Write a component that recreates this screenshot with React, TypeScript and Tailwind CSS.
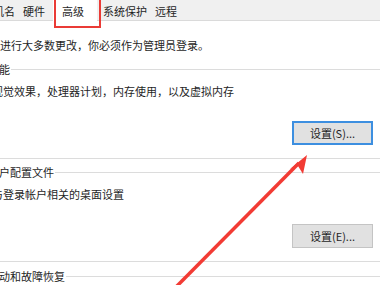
const font = { fontFamily: '"Microsoft YaHei", "Noto Sans CJK SC", "Noto Sans", sans-serif' };

function Tab({ label, className }: { label: string; className?: string }) {
  return (
    <div className={`h-[21px] flex items-center leading-[16px] text-[11px] text-[#1f1f1f] ${className ?? ""}`}>
      {label}
    </div>
  );
}

function Group({ title, desc, button, focused, className }: {
  title: string;
  desc?: string;
  button?: string;
  focused?: boolean;
  className?: string;
}) {
  return (
    <fieldset className={`border border-[#dcdcdc] pr-[14px] ${button ? "pb-[13px]" : "pb-[30px]"} ${className ?? ""}`}>
      <legend className="ml-[8px] px-px text-[11px] leading-[16px] text-[#1f1f1f]">{title}</legend>
      {desc && <p className="pt-[6px] pl-[13px] text-[11px] leading-[16px] text-[#1f1f1f]">{desc}</p>}
      {button && (
        <div className="flex justify-end mt-[22px]">
          <button
            className={`w-[81px] h-[24px] bg-[#e1e1e1] text-[11px] text-[#1f1f1f] ${
              focused ? "border-2 border-[#3d8fe0]" : "border border-[#c4c4c4]"
            }`}
          >
            {button}
          </button>
        </div>
      )}
    </fieldset>
  );
}

export default function App() {
  return (
    <div className="relative w-[380px] h-[285px] overflow-hidden bg-white" style={font}>
      <div className="flex h-[21px] bg-[#f0f0f0] border-b border-[#dadada]">
        <Tab label="计算机名" className="ml-[-33px] px-[4px]" />
        <Tab label="硬件" className="px-[4px]" />
        <Tab label="高级" className="ml-[4px] pl-[9px] pr-[13px] h-[22px] bg-white" />
        <Tab label="系统保护" className="pl-[6px] pr-[4px]" />
        <Tab label="远程" className="px-[4px]" />
      </div>

      <div className="ml-[-22px] w-[410px]">
        <p className="mt-[16px] pl-[11px] text-[11px] leading-[16px] text-[#1f1f1f]">
          要进行大多数更改，你必须作为管理员登录。
        </p>
        <Group
          className="mt-[8px]"
          title="性能"
          desc="视觉效果，处理器计划，内存使用，以及虚拟内存"
          button="设置(S)..."
          focused
        />
        <Group
          className="mt-[5px]"
          title="用户配置文件"
          desc="与登录帐户相关的桌面设置"
          button="设置(E)..."
        />
        <Group className="mt-[6px]" title="启动和故障恢复" />
      </div>

      {/* annotation: red box round the tab and red arrow */}
      <div className="absolute left-[54px] top-[-4px] w-[47px] h-[32px] border-2 border-[#ea3b36]" />
      <svg className="absolute inset-0" width="380" height="285" viewBox="0 0 380 285">
        <line x1="176" y1="287" x2="299" y2="163" stroke="#f23b34" strokeWidth="3.5" />
        <polygon points="307,155 303,174 298,166 290,169" fill="#f23b34" />
      </svg>
    </div>
  );
}
